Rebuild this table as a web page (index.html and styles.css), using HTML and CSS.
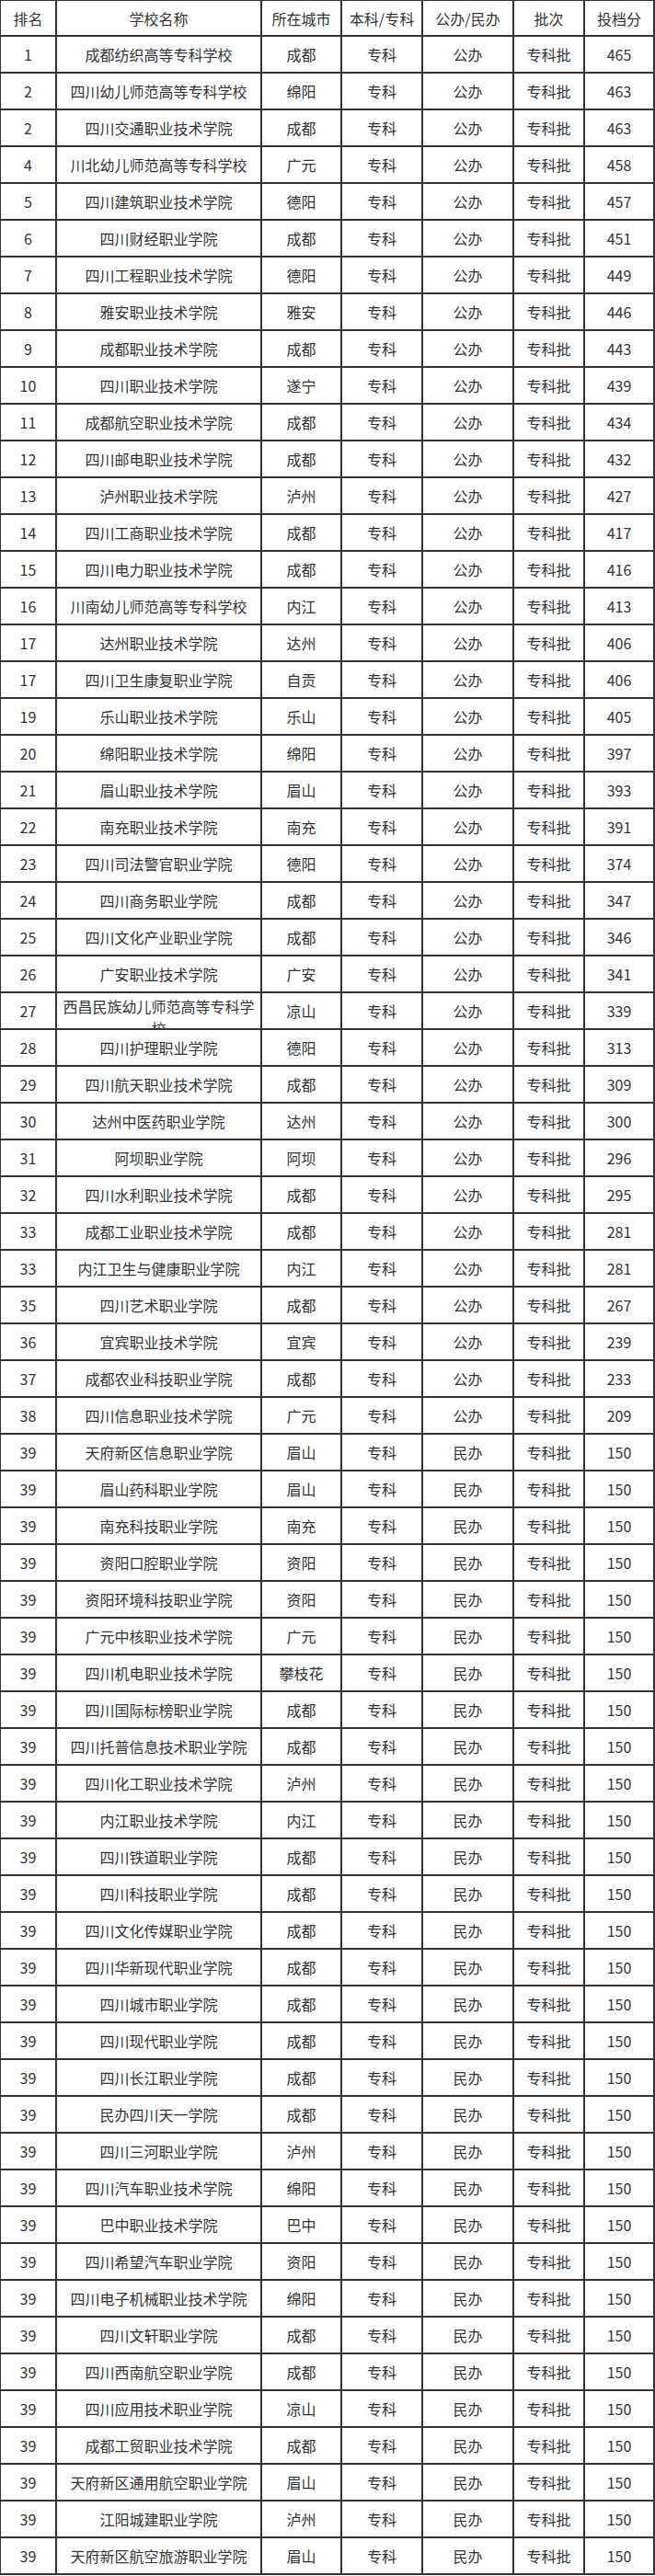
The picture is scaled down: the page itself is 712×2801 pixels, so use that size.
FILE: index.html
```html
<!DOCTYPE html>
<html lang="zh-CN">
<head>
<meta charset="utf-8">
<title>投档分</title>
<link rel="stylesheet" href="styles.css">
</head>
<body>
<div class="table">
<div class="c">排名</div><div class="c">学校名称</div><div class="c">所在城市</div><div class="c">本科/专科</div><div class="c">公办/民办</div><div class="c">批次</div><div class="c">投档分</div>
<div class="c">1</div><div class="c">成都纺织高等专科学校</div><div class="c">成都</div><div class="c">专科</div><div class="c">公办</div><div class="c">专科批</div><div class="c">465</div>
<div class="c">2</div><div class="c">四川幼儿师范高等专科学校</div><div class="c">绵阳</div><div class="c">专科</div><div class="c">公办</div><div class="c">专科批</div><div class="c">463</div>
<div class="c">2</div><div class="c">四川交通职业技术学院</div><div class="c">成都</div><div class="c">专科</div><div class="c">公办</div><div class="c">专科批</div><div class="c">463</div>
<div class="c">4</div><div class="c">川北幼儿师范高等专科学校</div><div class="c">广元</div><div class="c">专科</div><div class="c">公办</div><div class="c">专科批</div><div class="c">458</div>
<div class="c">5</div><div class="c">四川建筑职业技术学院</div><div class="c">德阳</div><div class="c">专科</div><div class="c">公办</div><div class="c">专科批</div><div class="c">457</div>
<div class="c">6</div><div class="c">四川财经职业学院</div><div class="c">成都</div><div class="c">专科</div><div class="c">公办</div><div class="c">专科批</div><div class="c">451</div>
<div class="c">7</div><div class="c">四川工程职业技术学院</div><div class="c">德阳</div><div class="c">专科</div><div class="c">公办</div><div class="c">专科批</div><div class="c">449</div>
<div class="c">8</div><div class="c">雅安职业技术学院</div><div class="c">雅安</div><div class="c">专科</div><div class="c">公办</div><div class="c">专科批</div><div class="c">446</div>
<div class="c">9</div><div class="c">成都职业技术学院</div><div class="c">成都</div><div class="c">专科</div><div class="c">公办</div><div class="c">专科批</div><div class="c">443</div>
<div class="c">10</div><div class="c">四川职业技术学院</div><div class="c">遂宁</div><div class="c">专科</div><div class="c">公办</div><div class="c">专科批</div><div class="c">439</div>
<div class="c">11</div><div class="c">成都航空职业技术学院</div><div class="c">成都</div><div class="c">专科</div><div class="c">公办</div><div class="c">专科批</div><div class="c">434</div>
<div class="c">12</div><div class="c">四川邮电职业技术学院</div><div class="c">成都</div><div class="c">专科</div><div class="c">公办</div><div class="c">专科批</div><div class="c">432</div>
<div class="c">13</div><div class="c">泸州职业技术学院</div><div class="c">泸州</div><div class="c">专科</div><div class="c">公办</div><div class="c">专科批</div><div class="c">427</div>
<div class="c">14</div><div class="c">四川工商职业技术学院</div><div class="c">成都</div><div class="c">专科</div><div class="c">公办</div><div class="c">专科批</div><div class="c">417</div>
<div class="c">15</div><div class="c">四川电力职业技术学院</div><div class="c">成都</div><div class="c">专科</div><div class="c">公办</div><div class="c">专科批</div><div class="c">416</div>
<div class="c">16</div><div class="c">川南幼儿师范高等专科学校</div><div class="c">内江</div><div class="c">专科</div><div class="c">公办</div><div class="c">专科批</div><div class="c">413</div>
<div class="c">17</div><div class="c">达州职业技术学院</div><div class="c">达州</div><div class="c">专科</div><div class="c">公办</div><div class="c">专科批</div><div class="c">406</div>
<div class="c">17</div><div class="c">四川卫生康复职业学院</div><div class="c">自贡</div><div class="c">专科</div><div class="c">公办</div><div class="c">专科批</div><div class="c">406</div>
<div class="c">19</div><div class="c">乐山职业技术学院</div><div class="c">乐山</div><div class="c">专科</div><div class="c">公办</div><div class="c">专科批</div><div class="c">405</div>
<div class="c">20</div><div class="c">绵阳职业技术学院</div><div class="c">绵阳</div><div class="c">专科</div><div class="c">公办</div><div class="c">专科批</div><div class="c">397</div>
<div class="c">21</div><div class="c">眉山职业技术学院</div><div class="c">眉山</div><div class="c">专科</div><div class="c">公办</div><div class="c">专科批</div><div class="c">393</div>
<div class="c">22</div><div class="c">南充职业技术学院</div><div class="c">南充</div><div class="c">专科</div><div class="c">公办</div><div class="c">专科批</div><div class="c">391</div>
<div class="c">23</div><div class="c">四川司法警官职业学院</div><div class="c">德阳</div><div class="c">专科</div><div class="c">公办</div><div class="c">专科批</div><div class="c">374</div>
<div class="c">24</div><div class="c">四川商务职业学院</div><div class="c">成都</div><div class="c">专科</div><div class="c">公办</div><div class="c">专科批</div><div class="c">347</div>
<div class="c">25</div><div class="c">四川文化产业职业学院</div><div class="c">成都</div><div class="c">专科</div><div class="c">公办</div><div class="c">专科批</div><div class="c">346</div>
<div class="c">26</div><div class="c">广安职业技术学院</div><div class="c">广安</div><div class="c">专科</div><div class="c">公办</div><div class="c">专科批</div><div class="c">341</div>
<div class="c">27</div><div class="c clip">西昌民族幼儿师范高等专科学校</div><div class="c">凉山</div><div class="c">专科</div><div class="c">公办</div><div class="c">专科批</div><div class="c">339</div>
<div class="c">28</div><div class="c">四川护理职业学院</div><div class="c">德阳</div><div class="c">专科</div><div class="c">公办</div><div class="c">专科批</div><div class="c">313</div>
<div class="c">29</div><div class="c">四川航天职业技术学院</div><div class="c">成都</div><div class="c">专科</div><div class="c">公办</div><div class="c">专科批</div><div class="c">309</div>
<div class="c">30</div><div class="c">达州中医药职业学院</div><div class="c">达州</div><div class="c">专科</div><div class="c">公办</div><div class="c">专科批</div><div class="c">300</div>
<div class="c">31</div><div class="c">阿坝职业学院</div><div class="c">阿坝</div><div class="c">专科</div><div class="c">公办</div><div class="c">专科批</div><div class="c">296</div>
<div class="c">32</div><div class="c">四川水利职业技术学院</div><div class="c">成都</div><div class="c">专科</div><div class="c">公办</div><div class="c">专科批</div><div class="c">295</div>
<div class="c">33</div><div class="c">成都工业职业技术学院</div><div class="c">成都</div><div class="c">专科</div><div class="c">公办</div><div class="c">专科批</div><div class="c">281</div>
<div class="c">33</div><div class="c">内江卫生与健康职业学院</div><div class="c">内江</div><div class="c">专科</div><div class="c">公办</div><div class="c">专科批</div><div class="c">281</div>
<div class="c">35</div><div class="c">四川艺术职业学院</div><div class="c">成都</div><div class="c">专科</div><div class="c">公办</div><div class="c">专科批</div><div class="c">267</div>
<div class="c">36</div><div class="c">宜宾职业技术学院</div><div class="c">宜宾</div><div class="c">专科</div><div class="c">公办</div><div class="c">专科批</div><div class="c">239</div>
<div class="c">37</div><div class="c">成都农业科技职业学院</div><div class="c">成都</div><div class="c">专科</div><div class="c">公办</div><div class="c">专科批</div><div class="c">233</div>
<div class="c">38</div><div class="c">四川信息职业技术学院</div><div class="c">广元</div><div class="c">专科</div><div class="c">公办</div><div class="c">专科批</div><div class="c">209</div>
<div class="c">39</div><div class="c">天府新区信息职业学院</div><div class="c">眉山</div><div class="c">专科</div><div class="c">民办</div><div class="c">专科批</div><div class="c">150</div>
<div class="c">39</div><div class="c">眉山药科职业学院</div><div class="c">眉山</div><div class="c">专科</div><div class="c">民办</div><div class="c">专科批</div><div class="c">150</div>
<div class="c">39</div><div class="c">南充科技职业学院</div><div class="c">南充</div><div class="c">专科</div><div class="c">民办</div><div class="c">专科批</div><div class="c">150</div>
<div class="c">39</div><div class="c">资阳口腔职业学院</div><div class="c">资阳</div><div class="c">专科</div><div class="c">民办</div><div class="c">专科批</div><div class="c">150</div>
<div class="c">39</div><div class="c">资阳环境科技职业学院</div><div class="c">资阳</div><div class="c">专科</div><div class="c">民办</div><div class="c">专科批</div><div class="c">150</div>
<div class="c">39</div><div class="c">广元中核职业技术学院</div><div class="c">广元</div><div class="c">专科</div><div class="c">民办</div><div class="c">专科批</div><div class="c">150</div>
<div class="c">39</div><div class="c">四川机电职业技术学院</div><div class="c">攀枝花</div><div class="c">专科</div><div class="c">民办</div><div class="c">专科批</div><div class="c">150</div>
<div class="c">39</div><div class="c">四川国际标榜职业学院</div><div class="c">成都</div><div class="c">专科</div><div class="c">民办</div><div class="c">专科批</div><div class="c">150</div>
<div class="c">39</div><div class="c">四川托普信息技术职业学院</div><div class="c">成都</div><div class="c">专科</div><div class="c">民办</div><div class="c">专科批</div><div class="c">150</div>
<div class="c">39</div><div class="c">四川化工职业技术学院</div><div class="c">泸州</div><div class="c">专科</div><div class="c">民办</div><div class="c">专科批</div><div class="c">150</div>
<div class="c">39</div><div class="c">内江职业技术学院</div><div class="c">内江</div><div class="c">专科</div><div class="c">民办</div><div class="c">专科批</div><div class="c">150</div>
<div class="c">39</div><div class="c">四川铁道职业学院</div><div class="c">成都</div><div class="c">专科</div><div class="c">民办</div><div class="c">专科批</div><div class="c">150</div>
<div class="c">39</div><div class="c">四川科技职业学院</div><div class="c">成都</div><div class="c">专科</div><div class="c">民办</div><div class="c">专科批</div><div class="c">150</div>
<div class="c">39</div><div class="c">四川文化传媒职业学院</div><div class="c">成都</div><div class="c">专科</div><div class="c">民办</div><div class="c">专科批</div><div class="c">150</div>
<div class="c">39</div><div class="c">四川华新现代职业学院</div><div class="c">成都</div><div class="c">专科</div><div class="c">民办</div><div class="c">专科批</div><div class="c">150</div>
<div class="c">39</div><div class="c">四川城市职业学院</div><div class="c">成都</div><div class="c">专科</div><div class="c">民办</div><div class="c">专科批</div><div class="c">150</div>
<div class="c">39</div><div class="c">四川现代职业学院</div><div class="c">成都</div><div class="c">专科</div><div class="c">民办</div><div class="c">专科批</div><div class="c">150</div>
<div class="c">39</div><div class="c">四川长江职业学院</div><div class="c">成都</div><div class="c">专科</div><div class="c">民办</div><div class="c">专科批</div><div class="c">150</div>
<div class="c">39</div><div class="c">民办四川天一学院</div><div class="c">成都</div><div class="c">专科</div><div class="c">民办</div><div class="c">专科批</div><div class="c">150</div>
<div class="c">39</div><div class="c">四川三河职业学院</div><div class="c">泸州</div><div class="c">专科</div><div class="c">民办</div><div class="c">专科批</div><div class="c">150</div>
<div class="c">39</div><div class="c">四川汽车职业技术学院</div><div class="c">绵阳</div><div class="c">专科</div><div class="c">民办</div><div class="c">专科批</div><div class="c">150</div>
<div class="c">39</div><div class="c">巴中职业技术学院</div><div class="c">巴中</div><div class="c">专科</div><div class="c">民办</div><div class="c">专科批</div><div class="c">150</div>
<div class="c">39</div><div class="c">四川希望汽车职业学院</div><div class="c">资阳</div><div class="c">专科</div><div class="c">民办</div><div class="c">专科批</div><div class="c">150</div>
<div class="c">39</div><div class="c">四川电子机械职业技术学院</div><div class="c">绵阳</div><div class="c">专科</div><div class="c">民办</div><div class="c">专科批</div><div class="c">150</div>
<div class="c">39</div><div class="c">四川文轩职业学院</div><div class="c">成都</div><div class="c">专科</div><div class="c">民办</div><div class="c">专科批</div><div class="c">150</div>
<div class="c">39</div><div class="c">四川西南航空职业学院</div><div class="c">成都</div><div class="c">专科</div><div class="c">民办</div><div class="c">专科批</div><div class="c">150</div>
<div class="c">39</div><div class="c">四川应用技术职业学院</div><div class="c">凉山</div><div class="c">专科</div><div class="c">民办</div><div class="c">专科批</div><div class="c">150</div>
<div class="c">39</div><div class="c">成都工贸职业技术学院</div><div class="c">成都</div><div class="c">专科</div><div class="c">民办</div><div class="c">专科批</div><div class="c">150</div>
<div class="c">39</div><div class="c">天府新区通用航空职业学院</div><div class="c">眉山</div><div class="c">专科</div><div class="c">民办</div><div class="c">专科批</div><div class="c">150</div>
<div class="c">39</div><div class="c">江阳城建职业学院</div><div class="c">泸州</div><div class="c">专科</div><div class="c">民办</div><div class="c">专科批</div><div class="c">150</div>
<div class="c">39</div><div class="c">天府新区航空旅游职业学院</div><div class="c">眉山</div><div class="c">专科</div><div class="c">民办</div><div class="c">专科批</div><div class="c">150</div>
</div>
</body>
</html>
```

FILE: styles.css
```css
html, body {
  margin: 0;
  padding: 0;
  background: #ffffff;
}

body {
  font-family: "Noto Sans CJK SC", "Noto Sans", sans-serif;
  font-size: 16px;
  color: #333333;
  width: 712px;
  height: 2801px;
}

.table {
  display: grid;
  grid-template-columns: 61px 223px 87px 88px 99px 77px 76px;
  grid-auto-rows: 40px;
  grid-template-rows: 39px;
  border-top: 1px solid #333333;
  border-left: 1px solid #333333;
  width: 712px;
  box-sizing: border-box;
}

.c {
  box-sizing: border-box;
  border-right: 2px solid #333333;
  border-bottom: 2px solid #333333;
  display: flex;
  align-items: center;
  justify-content: center;
  text-align: center;
  line-height: 24px;
  overflow: hidden;
  white-space: normal;
}

.c.clip {
  align-items: flex-start;
  padding-top: 2px;
}
```
